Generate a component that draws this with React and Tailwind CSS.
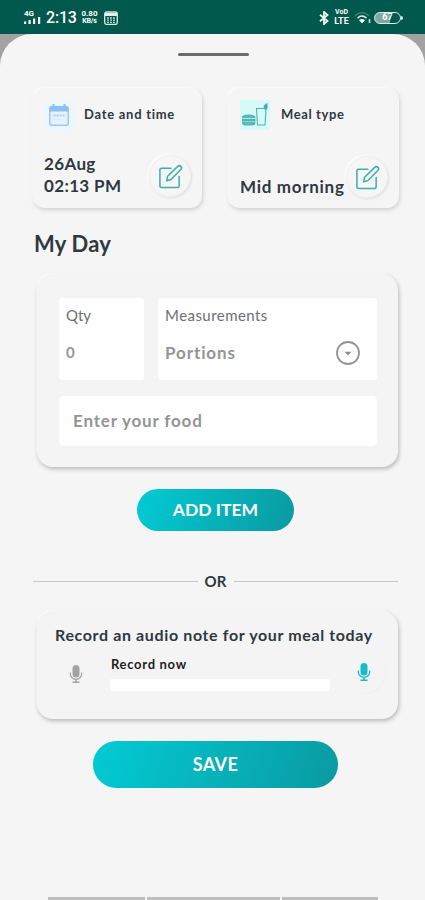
import React, { useState } from 'react';

const StatusBar = () => {
    return (
        <div className="flex h-[34px] items-start justify-between bg-[#00594c] pl-[23px] pr-[22px] pt-[9px] text-white">
            <div className="flex h-[17px] items-center font-[Roboto]">
                <div className="flex w-[19px] flex-col">
                    <span className="h-[7px] pl-px text-[8px] font-bold leading-[7px]">4G</span>
                    <svg width="18" height="8" viewBox="0 0 18 8" fill="currentColor">
                        <rect x="1" y="4.500" width="2.200" height="2.500" />
                        <rect x="5.500" y="3" width="2.200" height="4" />
                        <rect x="10" y="1.500" width="2.200" height="5.500" />
                        <rect x="15" y="0" width="2.200" height="7" />
                    </svg>
                </div>
                <span className="ml-[4px] w-[31px] whitespace-nowrap text-[16px] font-medium leading-[17px] tracking-[-0.2px]">2:13</span>
                <div className="ml-[4px] flex w-[17px] flex-col items-center text-[8px] font-bold leading-[8px]">
                    <span>0.80</span>
                    <span className="text-[7px] leading-[7px] tracking-[-0.2px]">KB/s</span>
                </div>
                <svg className="ml-[6px]" width="14" height="14" viewBox="0 0 14 14">
                    <rect x="0.700" y="1" width="12.600" height="12.400" rx="2" fill="none" stroke="#d7e8e5" strokeWidth="1.300" />
                    <path d="M1 2h12v3H1z" fill="#e5f0ee" />
                    <path d="M3 7h8M3 9.200h8M3 11.300h8" stroke="#b9d3cf" strokeWidth="1.300" strokeDasharray="2 1" />
                </svg>
            </div>
            <div className="flex h-[17px] items-center font-[Roboto]">
                <svg width="10" height="14" viewBox="0 0 10 14" fill="none" stroke="#e9f3f1" strokeWidth="1.900">
                    <path d="M1 3.800 8.500 10 5 13V1l3.500 3L1 10.200" />
                </svg>
                <div className="ml-[4px] flex w-[17px] flex-col items-center font-bold">
                    <span className="text-[7px] leading-[7px]">VoD</span>
                    <span className="text-[9px] leading-[10px]">LTE</span>
                </div>
                <svg className="ml-[4px]" width="17" height="13" viewBox="0 0 17 13" fill="none">
                    <path d="M1 5c4-4.500 10-4.500 14 0" stroke="#3d8075" strokeWidth="1.300" />
                    <path d="M3.500 7.300c2.700-3 6.300-3 9 0" stroke="#e9f3f1" strokeWidth="1.400" />
                    <path d="M5 9.200c1.800-1.700 4.200-1.700 6 0l-3 3z" fill="#fff" />
                    <path d="M15.500 8v4" stroke="#c9dedb" strokeWidth="1.600" />
                </svg>
                <div className="ml-[3px] flex h-[12px] w-[27px] items-center justify-center rounded-full border-[1.5px] border-[#dcebe8] bg-gradient-to-r from-[#7faaa3] from-60% to-[#00594c] to-60% text-[9px] font-bold leading-none">
                    67
                </div>
                <span className="h-[4px] w-[2px] rounded-r bg-[#dcebe8]" />
            </div>
        </div>
    );
}

const CalendarIcon = () => (
    <div className="flex h-[30px] w-[30px] items-center justify-center rounded-md bg-[#ebf6ff]">
        <svg width="22" height="24" viewBox="0 0 22 24">
            <rect x="1.800" y="4" width="18.400" height="18.200" rx="1.500" fill="#e6f2fe" stroke="#9cc8f6" strokeWidth="1.500" />
            <path d="M1.500 5a2 2 0 0 1 2-2h15a2 2 0 0 1 2 2v3.500h-19z" fill="#8dbef4" />
            <path d="M5.500 1v4M16.500 1v4" stroke="#8dbef4" strokeWidth="2" />
            <path d="M5.500 12.500h11" stroke="#a8cef7" strokeWidth="2" strokeDasharray="2 1" />
            <path d="M5.500 16.500h7" stroke="#d2e6fc" strokeWidth="1.500" strokeDasharray="2 1" />
        </svg>
    </div>
)

const MealIcon = () => (
    <div className="flex h-[30px] w-[30px] items-center justify-center bg-[#d8fbf9]">
        <svg width="28" height="26" viewBox="0 0 28 26" fill="none" stroke="#4bb5af" strokeWidth="1.100">
            <path d="M15.500 6.500h9.500l-1 16.500h-7.500z" />
            <path d="M23.300 6.500V3.500l2.700-1.700v4l-1.200 1.700z" fill="#35aca6" />
            <path d="M1.500 15.800c0-3.600 12.500-3.600 12.500 0z" fill="#5dbfb9" />
            <path d="M1 18h13.500" strokeWidth="2" />
            <path d="M1.500 20h12.500c0 3-2 3-3 3H4.500c-1 0-3 0-3-3z" fill="#5dbfb9" />
        </svg>
    </div>
)

const EditButton = () => (
    <button className="flex h-[42px] w-[42px] shrink-0 items-center justify-center rounded-full border border-[#efefef] bg-[#f6f6f6] shadow-[1px_1px_3px_rgba(0,0,0,0.09),-1px_-1px_2px_#ffffff]">
        <svg width="25" height="25" viewBox="0 0 26 26" fill="none" stroke="#3fb0a7" strokeWidth="1.600" strokeLinejoin="round" strokeLinecap="round">
            <path d="M13.500 4.500h-10A1.500 1.500 0 0 0 2 6v17a1.500 1.500 0 0 0 1.500 1.500h17A1.500 1.500 0 0 0 22 23V13" />
            <path d="M9 17.500l1-4.800L20.500 2.500a2.300 2.300 0 0 1 3.300 3.300L13.500 16.200z" />
        </svg>
    </button>
)

const MicIcon = () => (
    <svg width="14" height="20" viewBox="0 0 14 20" fill="none" stroke="currentColor">
        <rect x="3.500" y="1" width="7" height="12.500" rx="3.500" fill="currentColor" stroke="none" />
        <path d="M1.300 8.500v1.500a5.700 5.400 0 0 0 11.400 0V8.500" strokeWidth="1.300" />
        <path d="M7 15v3M3.500 18.300h7" strokeWidth="1.600" />
    </svg>
)

const CARD = 'rounded-[12px] bg-[#f5f5f5] shadow-[1px_2px_4px_rgba(0,0,0,0.15),-1px_-1px_2px_#ffffff]';
const PANEL = 'rounded-[16px] bg-[#f4f4f4] shadow-[1px_2px_4px_rgba(0,0,0,0.25),-1px_-1px_1px_#ffffff]';

export default function App() {
    const [qty, setQty] = useState('');
    const [food, setFood] = useState('');

    return (
        <div className="flex h-[900px] w-[425px] flex-col overflow-hidden bg-[#a2a2a2] font-[Lato,sans-serif] text-[#30383f]">
            <StatusBar />
            <div className="flex flex-1 flex-col rounded-t-[32px] bg-[#f5f5f5] pt-[19px]">
                <div className="ml-[178px] h-[3px] w-[71px] rounded-full bg-[#6b6b6b]" />

                <div className="mt-[32px] flex justify-between pl-[33px] pr-[26px]">
                    <div className={`flex h-[120px] w-[169px] flex-col justify-between pb-[11px] pl-[11px] pr-[11px] pt-[12px] ${CARD}`}>
                        <div className="flex items-center gap-[10px]">
                            <CalendarIcon />
                            <span className="whitespace-nowrap text-[13px] font-bold tracking-[0.73px]">Date and time</span>
                        </div>
                        <div className="flex items-end justify-between">
                            <div className="whitespace-nowrap text-[17px] font-bold leading-[22px] tracking-[0.35px]">
                                <div>26Aug</div>
                                <div>02:13 PM</div>
                            </div>
                            <EditButton />
                        </div>
                    </div>
                    <div className={`flex h-[120px] w-[171px] flex-col justify-between pb-[10px] pl-[12px] pr-[10px] pt-[12px] ${CARD}`}>
                        <div className="flex items-center gap-[11px]">
                            <MealIcon />
                            <span className="whitespace-nowrap text-[13px] font-bold tracking-[0.6px]">Meal type</span>
                        </div>
                        <div className="flex items-end">
                            <div className="w-[106px] whitespace-nowrap text-[17px] font-bold leading-[22px] tracking-[0.7px]">Mid morning</div>
                            <EditButton />
                        </div>
                    </div>
                </div>

                <h1 className="mt-[22px] pl-[34px] text-[22px] font-bold leading-[28px] tracking-[0.2px]">My Day</h1>

                <div className={`ml-[37px] mt-[16px] flex h-[193px] w-[361px] flex-col gap-[16px] pl-[22px] pt-[24px] ${PANEL}`}>
                    <div className="flex gap-[14px]">
                        <div className="flex h-[82px] w-[85px] flex-col rounded-[4px] bg-white pl-[7px] pt-[7px]">
                            <label className="text-[15px] leading-[20px] text-[#6c7074]">Qty</label>
                            <input
                                type="text"
                                value={qty}
                                onChange={(e) => setQty(e.target.value)}
                                placeholder="0"
                                className="mt-[17px] h-[20px] w-[60px] text-[15px] font-bold outline-none placeholder:text-[#959595]"
                            />
                        </div>
                        <div className="flex h-[82px] w-[219px] flex-col rounded-[4px] bg-white pl-[7px] pr-[16px] pt-[7px]">
                            <label className="text-[15px] leading-[20px] tracking-[0.45px] text-[#6c7074]">Measurements</label>
                            <div className="mt-[15px] flex items-center justify-between">
                                <span className="text-[17px] font-bold leading-[24px] tracking-[0.9px] text-[#949494]">Portions</span>
                                <svg width="26" height="26" viewBox="0 0 26 26">
                                    <circle cx="13" cy="13" r="11" fill="none" stroke="#949494" strokeWidth="1.800" />
                                    <path d="M9.500 11.800h7L13 15.500z" fill="#8f8f8f" />
                                </svg>
                            </div>
                        </div>
                    </div>
                    <input
                        type="text"
                        value={food}
                        onChange={(e) => setFood(e.target.value)}
                        placeholder="Enter your food"
                        className="h-[50px] w-[318px] rounded-[5px] bg-white px-[14px] pb-[2px] text-[17px] font-bold tracking-[0.82px] outline-none placeholder:text-[#949494]"
                    />
                </div>

                <button className="ml-[137px] mt-[22px] h-[42px] w-[157px] rounded-full bg-linear-[110deg] from-[#03cbd4] to-[#0a9aa1] text-[17.5px] font-bold text-white">
                    ADD ITEM
                </button>

                <div className="mt-[40px] flex h-[20px] items-center pl-[33px] pr-[27px]">
                    <span className="h-px flex-1 bg-[#c3c9c9]" />
                    <span className="w-[36px] text-center text-[15px] font-bold">OR</span>
                    <span className="h-px flex-1 bg-[#c3c9c9]" />
                </div>

                <div className={`ml-[37px] mt-[20px] h-[108px] w-[361px] pl-[18px] pt-[13px] ${PANEL}`}>
                    <div className="whitespace-nowrap text-[16px] font-bold leading-[22px] tracking-[0.63px]">Record an audio note for your meal today</div>
                    <div className="mt-[4px] flex">
                        <button className="mt-[3px] flex h-[42px] w-[42px] items-center justify-center text-[#a3a3a3]">
                            <MicIcon />
                        </button>
                        <div className="ml-[13px] w-[220px] pt-[4px]">
                            <div className="pl-px text-[13px] font-bold leading-[20px] tracking-[0.7px] text-[#1d1d1d]">Record now</div>
                            <div className="mt-[5px] h-[12px] rounded-[2px] bg-white" />
                        </div>
                        <button className="ml-[13px] mt-px flex h-[42px] w-[42px] items-center justify-center rounded-full text-[#16bcc6] shadow-[1px_1px_1px_rgba(0,0,0,0.02)]">
                            <MicIcon />
                        </button>
                    </div>
                </div>

                <button className="ml-[93px] mt-[22px] h-[47px] w-[245px] rounded-full bg-linear-[110deg] from-[#03cbd4] to-[#0a9aa1] text-[18px] font-bold tracking-[0.4px] text-white">
                    SAVE
                </button>

                <div className="ml-[48px] mt-auto flex h-[3px] gap-[2px]">
                    <span className="w-[97px] bg-[#bdbdbd]" />
                    <span className="w-[133px] bg-[#bdbdbd]" />
                    <span className="w-[96px] bg-[#bdbdbd]" />
                </div>
            </div>
        </div>
    );
}
